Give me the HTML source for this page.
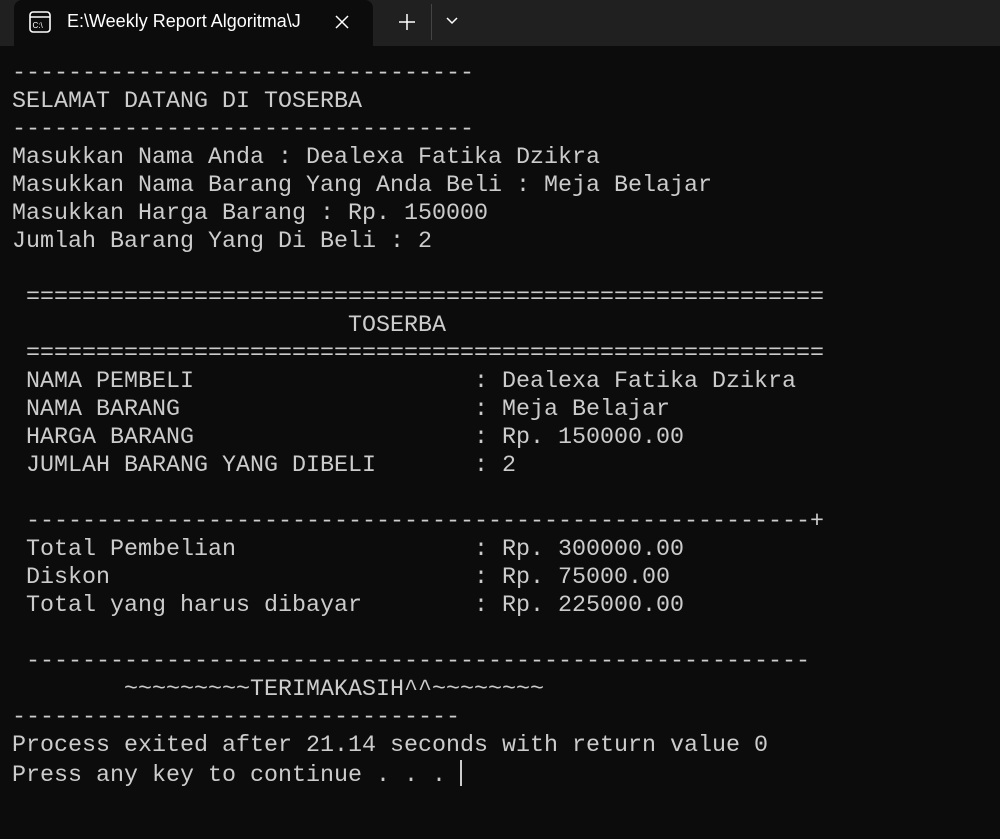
<!DOCTYPE html>
<html><head><style>
html,body{margin:0;padding:0;background:#0c0c0c;width:1000px;height:839px;overflow:hidden}
.bar{position:absolute;left:0;top:0;width:1000px;height:46px;background:#202020}
.tab{position:absolute;left:14px;top:0;width:359px;height:46px;background:#0c0c0c;border-radius:8px 8px 0 0}
.title{position:absolute;left:67px;top:11px;font:18px "Liberation Sans",sans-serif;color:#fff}
pre{position:absolute;left:12px;top:60px;margin:0;font-family:"Liberation Mono",monospace;font-size:23.33px;line-height:28px;color:#cccccc}
.cur{display:inline-block;width:2px;height:26px;background:#ccc;vertical-align:-5px}
</style></head><body>
<div class="bar"></div>
<div class="tab"></div>
<svg style="position:absolute;left:29px;top:11px" width="22" height="22" viewBox="0 0 22 22"><rect x="1" y="1" width="20" height="20" rx="3" fill="none" stroke="#fff" stroke-width="1.6"/><line x1="1" y1="6" x2="21" y2="6" stroke="#fff" stroke-width="1.4"/><text x="3.5" y="17" font-family="Liberation Sans" font-size="8" fill="#fff">C:\</text></svg>
<div class="title">E:\Weekly Report Algoritma\J</div>
<svg style="position:absolute;left:334px;top:14px" width="16" height="16"><path d="M2 2L14 14M14 2L2 14" stroke="#fff" stroke-width="1.5"/></svg>
<svg style="position:absolute;left:398px;top:13px" width="18" height="18"><path d="M9 1V17M1 9H17" stroke="#fff" stroke-width="1.5"/></svg>
<div style="position:absolute;left:431px;top:4px;width:1px;height:36px;background:#444"></div>
<svg style="position:absolute;left:445px;top:16px" width="14" height="10"><path d="M2 2L7 7L12 2" stroke="#fff" stroke-width="1.5" fill="none"/></svg>
<pre>---------------------------------
SELAMAT DATANG DI TOSERBA
---------------------------------
Masukkan Nama Anda : Dealexa Fatika Dzikra
Masukkan Nama Barang Yang Anda Beli : Meja Belajar
Masukkan Harga Barang : Rp. 150000
Jumlah Barang Yang Di Beli : 2

 =========================================================
                        TOSERBA
 =========================================================
 NAMA PEMBELI                    : Dealexa Fatika Dzikra
 NAMA BARANG                     : Meja Belajar
 HARGA BARANG                    : Rp. 150000.00
 JUMLAH BARANG YANG DIBELI       : 2

 --------------------------------------------------------+
 Total Pembelian                 : Rp. 300000.00
 Diskon                          : Rp. 75000.00
 Total yang harus dibayar        : Rp. 225000.00

 --------------------------------------------------------
        ~~~~~~~~~TERIMAKASIH^^~~~~~~~~
--------------------------------
Process exited after 21.14 seconds with return value 0
Press any key to continue . . . <span class="cur"></span></pre>
</body></html>
